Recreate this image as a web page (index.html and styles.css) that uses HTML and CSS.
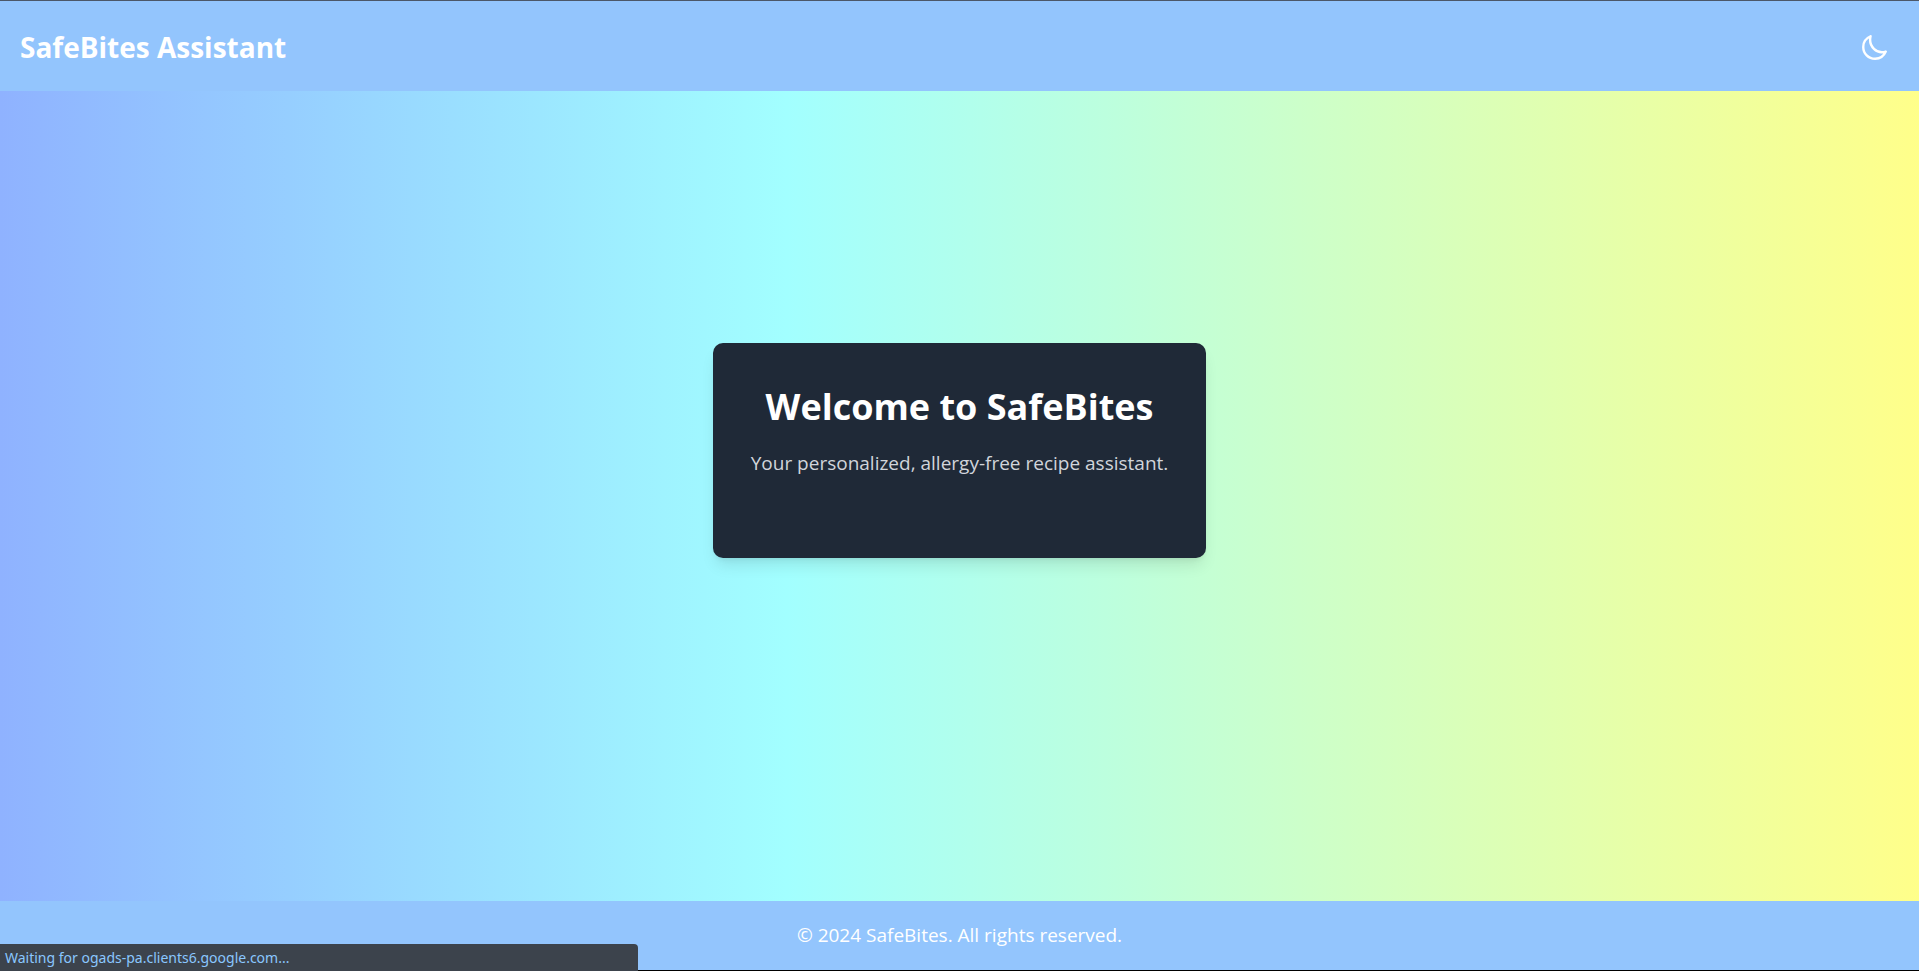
FILE: index.html
```html
<!DOCTYPE html>
<html lang="en">
<head>
<meta charset="utf-8">
<meta name="viewport" content="width=device-width, initial-scale=1">
<title>SafeBites Assistant</title>
<link rel="stylesheet" href="styles.css">
</head>
<body class="page">
<header class="header">
<h1 class="brand">SafeBites Assistant</h1>
<button class="theme-toggle" type="button" aria-label="Toggle dark mode">
<svg class="theme-icon" viewBox="0 0 24 24" fill="none" stroke="currentColor" stroke-width="2.3" stroke-linecap="round" stroke-linejoin="round" aria-hidden="true"><path d="M8.2 1.2C3.6 3.2 1.2 7 1.2 11.4C1.2 17.8 6.2 22.8 12.6 22.8C17.2 22.8 21 20.2 22.8 15.9C14.2 18.6 6 11 8.2 1.2Z"/></svg>
</button>
</header>
<main class="main">
<section class="card">
<h2 class="card-title">Welcome to SafeBites</h2>
<p class="card-text">Your personalized, allergy-free recipe assistant.</p>
</section>
</main>
<footer class="footer">
<p class="copyright">© 2024 SafeBites. All rights reserved.</p>
</footer>
<div class="status" role="status">Waiting for ogads-pa.clients6.google.com...</div>
</body>
</html>
```
FILE: styles.css
```css
* {
  box-sizing: border-box;
  margin: 0;
}

.page {
  display: flex;
  flex-direction: column;
  min-height: 100vh;
  border-top: 1px solid #4b5768;
  border-bottom: 1px solid #000;
  background: #93c5fd;
  color: #fff;
  font-family: "Segoe UI", "Open Sans", "Noto Sans", sans-serif;
}

.header {
  display: flex;
  align-items: center;
  justify-content: space-between;
  padding: 24px 32px 22px 20px;
}

.brand {
  font-size: 28px;
  line-height: 44px;
  font-weight: 700;
}

.theme-toggle {
  display: flex;
  padding: 0;
  border: 0;
  background: none;
  color: inherit;
  cursor: pointer;
}

.theme-icon {
  width: 25px;
  height: 25px;
}

.main {
  flex: 1;
  display: flex;
  align-items: center;
  justify-content: center;
  padding-bottom: 92px;
  background: linear-gradient(90deg, #8fb2ff 0%, #a2ffff 41%, #ffff8a 100%);
}

.card {
  padding: 40px 38px 80px;
  border-radius: 10px;
  background: #1f2937;
  text-align: center;
  box-shadow: 0 10px 15px -3px rgba(0, 0, 0, 0.1), 0 4px 6px -4px rgba(0, 0, 0, 0.1);
}

.card-title {
  margin-bottom: 18px;
  font-size: 36px;
  line-height: 47px;
  font-weight: 700;
}

.card-text {
  color: #d1d5db;
  font-size: 19px;
  line-height: 30px;
}

.footer {
  padding: 20px;
  text-align: center;
}

.copyright {
  font-size: 19px;
  line-height: 29px;
}

.status {
  position: fixed;
  left: 0;
  bottom: 0;
  width: 638px;
  max-width: 100%;
  height: 27px;
  padding: 0 5px;
  border-top-right-radius: 4px;
  background: #3c434c;
  color: #8ac7ff;
  font-family: "Segoe UI", "Noto Sans", sans-serif;
  font-size: 14px;
  line-height: 27px;
}
```
